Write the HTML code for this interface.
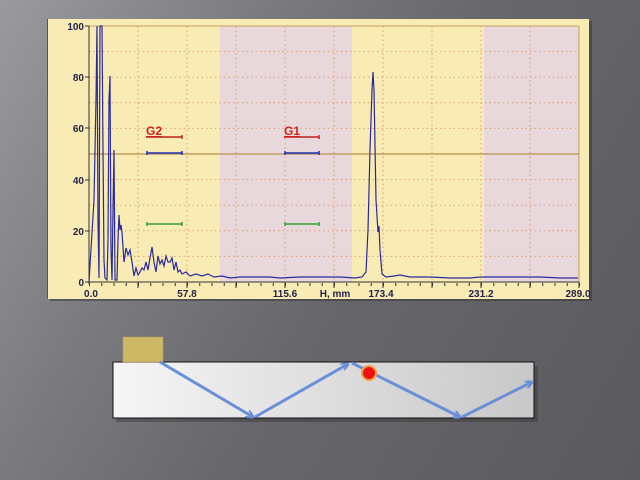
<!DOCTYPE html>
<html><head><style>
body{margin:0;width:640px;height:480px;overflow:hidden;background:linear-gradient(120deg,#9a9a9e 0%,#7a7a7f 30%,#66666b 55%,#5a5a5f 100%);font-family:"Liberation Sans",sans-serif;}
svg{position:absolute;left:0;top:0}
</style></head><body>
<svg width="640" height="480" viewBox="0 0 640 480">
<defs>
<linearGradient id="blk" x1="0" x2="1" y1="0" y2="0"><stop offset="0" stop-color="#f6f6f6"/><stop offset="0.5" stop-color="#dedede"/><stop offset="1" stop-color="#c8c8c8"/></linearGradient>
<marker id="ah" markerWidth="8" markerHeight="8" refX="7" refY="4" orient="auto" markerUnits="userSpaceOnUse"><path d="M0,0 L8,4 L0,8" fill="none" stroke="#6a8fd8" stroke-width="2"/></marker>
</defs>
<rect x="50" y="21" width="542" height="280" fill="#333" opacity="0.5"/>
<rect x="47" y="19" width="542" height="280" fill="#f8ebb4"/>
<line x1="47.5" y1="19" x2="47.5" y2="299" stroke="#555" stroke-width="1"/>
<rect x="220" y="26" width="132" height="256" fill="#e8d8dc"/>
<rect x="484" y="26" width="95" height="256" fill="#e8d8dc"/>
<g stroke="#e0a070" stroke-width="1" stroke-dasharray="1.5,3">
<line x1="138" y1="26" x2="138" y2="282"/><line x1="187" y1="26" x2="187" y2="282"/><line x1="236" y1="26" x2="236" y2="282"/><line x1="285" y1="26" x2="285" y2="282"/><line x1="334" y1="26" x2="334" y2="282"/><line x1="383" y1="26" x2="383" y2="282"/><line x1="432" y1="26" x2="432" y2="282"/><line x1="481" y1="26" x2="481" y2="282"/><line x1="530" y1="26" x2="530" y2="282"/>
<line x1="89" y1="51.6" x2="579" y2="51.6"/><line x1="89" y1="77.2" x2="579" y2="77.2"/><line x1="89" y1="102.8" x2="579" y2="102.8"/><line x1="89" y1="128.4" x2="579" y2="128.4"/><line x1="89" y1="179.6" x2="579" y2="179.6"/><line x1="89" y1="205.2" x2="579" y2="205.2"/><line x1="89" y1="230.8" x2="579" y2="230.8"/><line x1="89" y1="256.4" x2="579" y2="256.4"/>
</g>
<rect x="89" y="26" width="490" height="256" fill="none" stroke="#c8a060" stroke-width="1"/>
<line x1="89" y1="154" x2="579" y2="154" stroke="#b89050" stroke-width="1.2"/>
<line x1="89" y1="26" x2="89" y2="284" stroke="#333" stroke-width="1"/>
<line x1="89" y1="282" x2="579" y2="282" stroke="#333" stroke-width="1"/>
<g stroke="#333" stroke-width="1">
<line x1="85" y1="26" x2="89" y2="26"/><line x1="85" y1="77" x2="89" y2="77"/><line x1="85" y1="128" x2="89" y2="128"/><line x1="85" y1="180" x2="89" y2="180"/><line x1="85" y1="231" x2="89" y2="231"/><line x1="85" y1="282" x2="89" y2="282"/>
</g>
<g stroke="#333" stroke-width="1" stroke-dasharray="1,11.25">
<line x1="89" y1="284.5" x2="580" y2="284.5" stroke-width="3"/>
</g>
<g stroke="#333" stroke-width="1">
<line x1="138" y1="282" x2="138" y2="288"/><line x1="187" y1="282" x2="187" y2="288"/><line x1="236" y1="282" x2="236" y2="288"/><line x1="285" y1="282" x2="285" y2="288"/><line x1="334" y1="282" x2="334" y2="288"/><line x1="383" y1="282" x2="383" y2="288"/><line x1="432" y1="282" x2="432" y2="288"/><line x1="481" y1="282" x2="481" y2="288"/><line x1="530" y1="282" x2="530" y2="288"/><line x1="579" y1="282" x2="579" y2="288"/>
</g>
<g font-size="10" font-weight="bold" fill="#23234a" text-anchor="end">
<text x="84" y="30">100</text><text x="84" y="81">80</text><text x="84" y="132">60</text><text x="84" y="184">40</text><text x="84" y="235">20</text><text x="84" y="286">0</text>
</g>
<g font-size="10" font-weight="bold" fill="#23234a" text-anchor="middle">
<text x="91" y="297">0.0</text><text x="187" y="297">57.8</text><text x="285" y="297">115.6</text><text x="335" y="297">H, mm</text><text x="381" y="297">173.4</text><text x="481" y="297">231.2</text><text x="578" y="297">289.0</text>
</g>
<g stroke="#c02020" stroke-width="1.5"><line x1="146" y1="137" x2="182" y2="137"/><line x1="284" y1="137" x2="319" y2="137"/><line x1="182" y1="135" x2="182" y2="139"/><line x1="319" y1="135" x2="319" y2="139"/></g>
<g font-size="12" font-weight="bold" fill="#d02020" text-decoration="underline"><text x="146" y="135">G2</text><text x="284" y="135">G1</text></g>
<g stroke="#2030b0" stroke-width="1.5"><line x1="147" y1="153" x2="182" y2="153"/><line x1="285" y1="153" x2="319" y2="153"/><line x1="147" y1="151" x2="147" y2="155"/><line x1="182" y1="151" x2="182" y2="155"/><line x1="285" y1="151" x2="285" y2="155"/><line x1="319" y1="151" x2="319" y2="155"/></g>
<g stroke="#30a030" stroke-width="1.5"><line x1="147" y1="224" x2="182" y2="224"/><line x1="285" y1="224" x2="319" y2="224"/><line x1="147" y1="222" x2="147" y2="226"/><line x1="182" y1="222" x2="182" y2="226"/><line x1="285" y1="222" x2="285" y2="226"/><line x1="319" y1="222" x2="319" y2="226"/></g>
<polyline fill="none" stroke="#2a2aa0" stroke-width="1.2" points="89,282 94,200 96,100 97,26 98,220 99,278 100,26 101,26 102,26 103,150 104,260 105,278 107,280 108,240 109,100 110,76 111,250 112,280 113,210 114,150 115,280 117,280 118,240 119,215 120,230 121,225 122,232 124,262 126,248 128,255 130,250 132,262 134,276 136,268 138,275 140,272 142,268 144,270 146,262 148,270 150,258 152,247 154,262 156,272 158,256 160,264 162,260 164,266 166,256 168,262 170,262 172,258 174,270 176,262 178,272 180,270 182,274 186,272 190,276 196,274 202,276 208,274 214,277 222,276 230,278 240,277 250,277 260,277 270,277 280,278 300,277 320,277 340,277 355,278 362,277 366,272 368,230 370,150 372,90 373,72 374,90 376,200 378,232 379,226 380,250 382,274 386,277 394,276 400,275 410,277 430,277 450,278 470,278 480,277 500,277 520,277 540,277 560,278 578,278"/>
<rect x="116" y="366" width="422" height="56" fill="#333" opacity="0.4"/>
<rect x="113" y="362" width="421" height="56" fill="url(#blk)" stroke="#111" stroke-width="1"/>
<rect x="123" y="337" width="40" height="25" fill="#cdb866" stroke="#b8a050" stroke-width="0.5"/>
<g stroke="#6a8fd8" stroke-width="3" fill="none" marker-end="url(#ah)">
<line x1="160" y1="362" x2="253" y2="417"/>
<line x1="255" y1="417" x2="348" y2="364"/>
<line x1="352" y1="363" x2="460" y2="417"/>
<line x1="462" y1="417" x2="532" y2="382"/>
</g>
<circle cx="369" cy="373" r="7" fill="#ee1010" stroke="#f5a040" stroke-width="2"/>
</svg>
</body></html>
